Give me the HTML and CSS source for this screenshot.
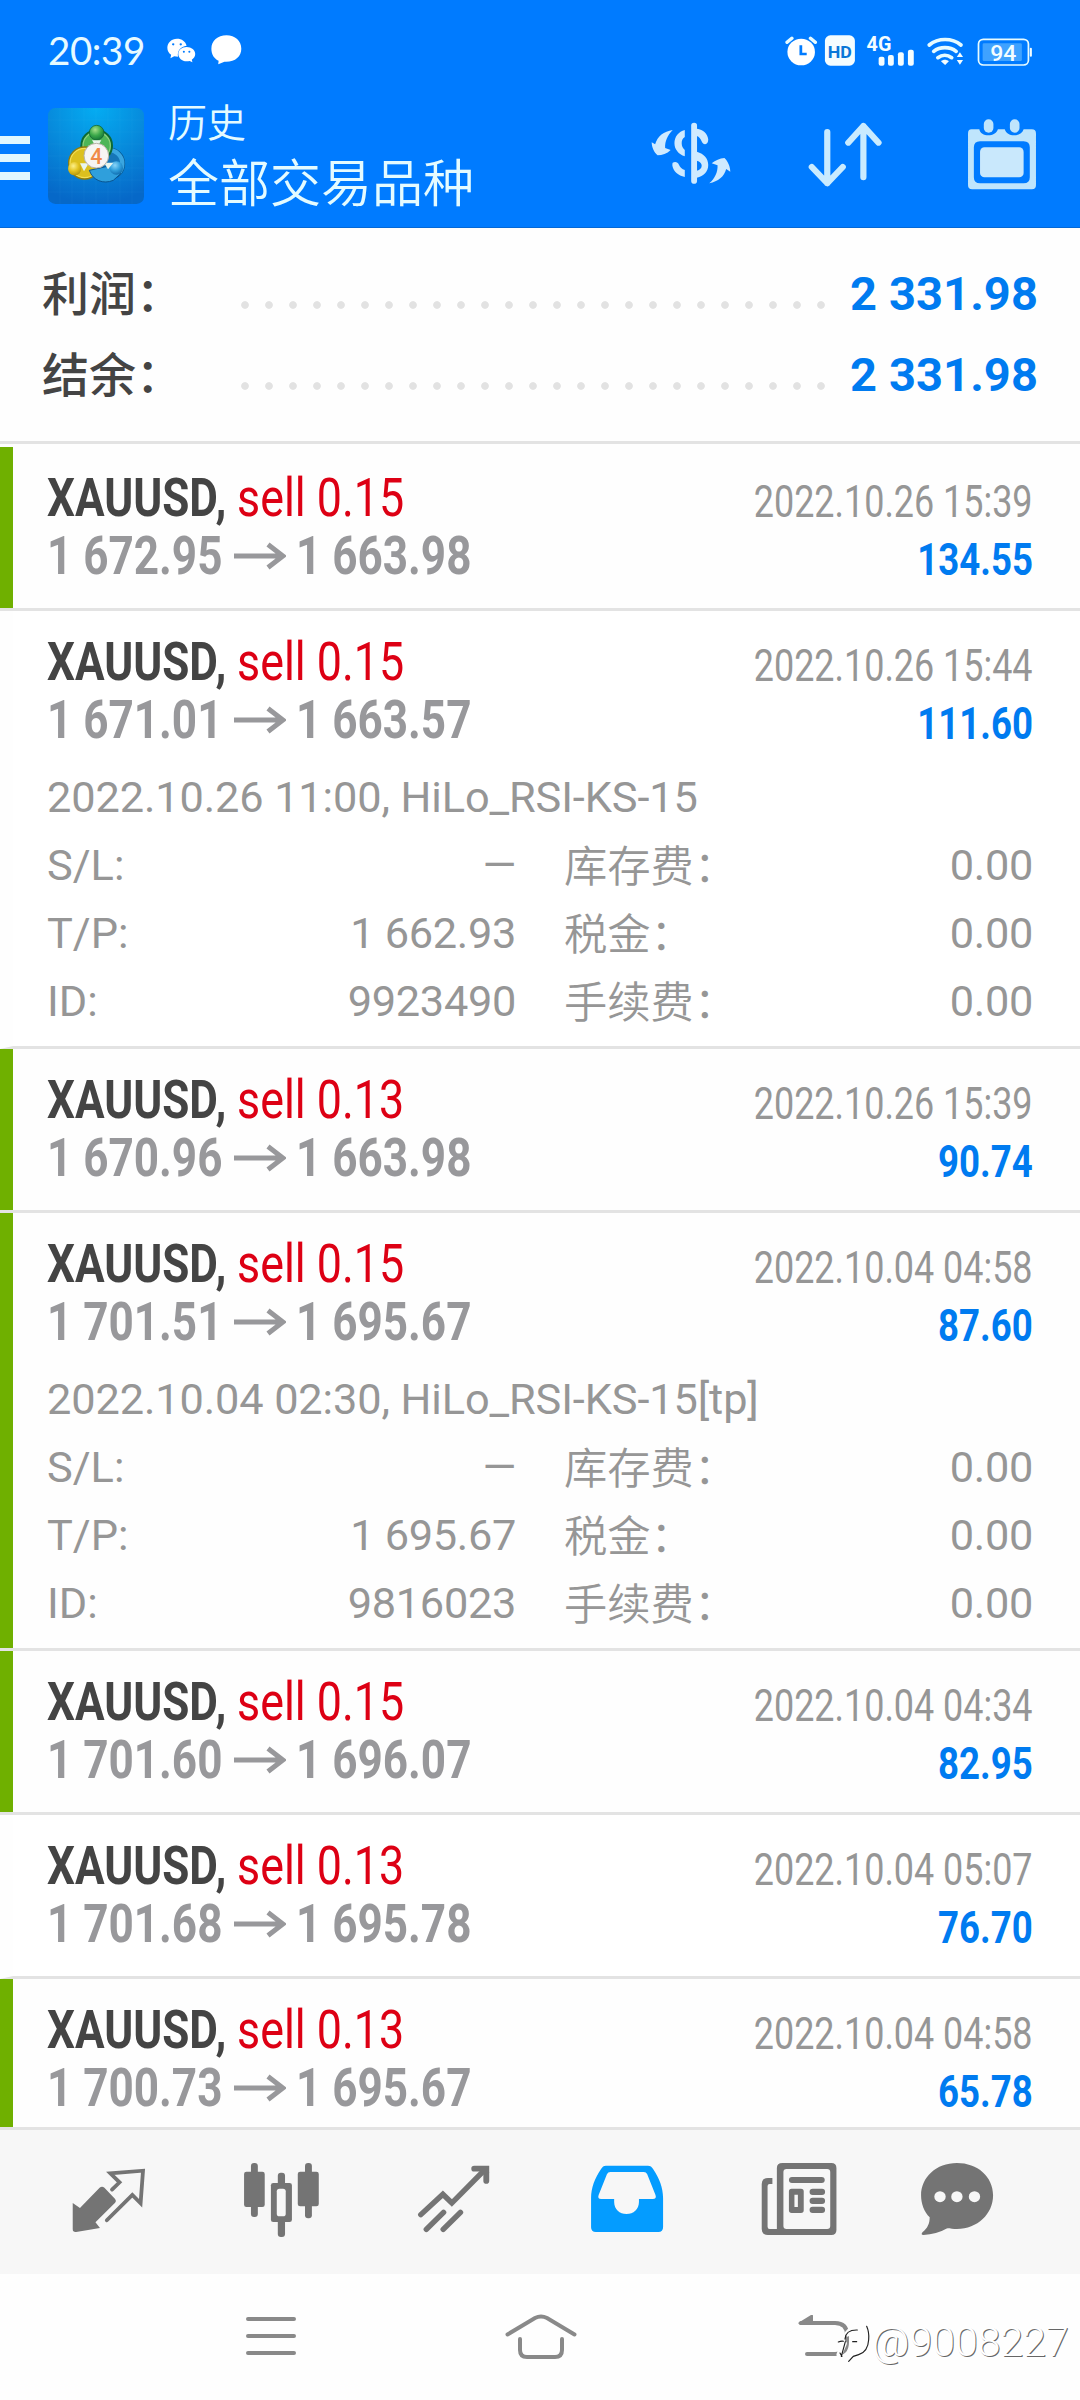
FILE: index.html
```html
<!DOCTYPE html>
<html lang="zh-CN">
<head>
<meta charset="utf-8">
<title>历史</title>
<link rel="stylesheet" href="styles.css">
</head>
<body>
<div class="screen">
  <header class="header">
    <div class="status">
      <span class="clock">20:39</span>
      <svg class="status-apps" viewBox="484 100 218 104" preserveAspectRatio="none" fill="#fff">
        <path d="M513 117c-16 0-28 12-28 27 0 9 4 16 11 21l-2 11 11-6c4 1 7 1 11 1-3-18 8-31 25-33-3-13-14-21-28-21z"/>
        <path d="M541 142c-14 0-24 9-24 21s10 22 24 22c3 0 6 0 9-1l8 4-2-8c6-4 10-10 10-17 0-12-11-21-25-21z"/>
        <g fill="#007bff"><circle cx="502" cy="134" r="3.5"/><circle cx="524" cy="134" r="3.5"/><circle cx="533" cy="156" r="3"/><circle cx="549" cy="156" r="3"/></g>
        <path d="M657 107c-26 0-44 17-44 40 0 17 8 30 21 36l-1 11 18-8c30 2 49-15 49-39 0-23-18-40-43-40z"/>
      </svg>
      <svg class="status-system" viewBox="712 100 722 104" preserveAspectRatio="none" fill="#f4fdff">
        <circle cx="759" cy="157" r="40" fill="#fff"/>
        <path d="M718 128l14-12M800 128l-14-12" stroke="#e6fbff" stroke-width="10" stroke-linecap="round"/>
        <path d="M758 137v26h17" fill="none" stroke="#007bff" stroke-width="8"/>
        <rect x="828" y="107" width="87" height="91" rx="16"/>
        <text x="836" y="174" class="t-hd" textLength="70" lengthAdjust="spacingAndGlyphs" fill="#0a78d8">HD</text>
        <text x="949" y="153" class="t-4g" textLength="72" lengthAdjust="spacingAndGlyphs">4G</text>
        <rect x="984" y="171" width="17" height="27" rx="6"/><rect x="1011" y="166" width="17" height="32" rx="6"/><rect x="1040" y="158" width="17" height="40" rx="6"/><rect x="1069" y="150" width="17" height="48" rx="6"/>
        <g fill="none" stroke="#e6fbff" stroke-width="11" stroke-linecap="round"><path d="M1131 136c26-22 66-22 92 0"/><path d="M1144 155c18-15 47-15 65 0"/><path d="M1156 174c12-9 28-9 40 0"/></g>
        <path d="M1165 185c7-6 16-6 23 0l-11 11z"/>
        <path d="M1211 172l9-14 9 14zM1211 181l9 14 9-14z"/>
        <rect x="1274" y="119" width="145" height="77" rx="14" fill="none" stroke="#e6fbff" stroke-width="5"/>
        <rect x="1286" y="131" width="114" height="53" rx="4" fill="#3fa2ff"/>
        <rect x="1423" y="144" width="6" height="27" rx="3"/>
        <text x="1308" y="183" class="t-bat" textLength="76" lengthAdjust="spacingAndGlyphs">94</text>
      </svg>
    </div>
    <div class="toolbar">
      <svg class="burger" viewBox="0 0 30 44" fill="#e0f7ff"><path d="M0 0h30v8H0zM0 18h30v8H0zM0 36h30v8H0z"/></svg>
      <svg class="logo" viewBox="0 0 288 288">
        <defs>
          <radialGradient id="bg" cx=".5" cy="0" r="1"><stop offset="0" stop-color="#04acf2"/><stop offset=".5" stop-color="#078bdc"/><stop offset="1" stop-color="#0668c8"/></radialGradient>
          <radialGradient id="gg" cx=".4" cy=".3" r=".8"><stop offset="0" stop-color="#a6e08a"/><stop offset=".5" stop-color="#3ba84a"/><stop offset="1" stop-color="#0d6a34"/></radialGradient>
          <radialGradient id="gy" cx=".4" cy=".3" r=".8"><stop offset="0" stop-color="#fdf08a"/><stop offset=".5" stop-color="#e2c21e"/><stop offset="1" stop-color="#a88a0c"/></radialGradient>
          <radialGradient id="gb" cx=".4" cy=".3" r=".8"><stop offset="0" stop-color="#8ad4f8"/><stop offset=".5" stop-color="#2f9fdc"/><stop offset="1" stop-color="#0a62a6"/></radialGradient>
        </defs>
        <rect width="288" height="288" rx="22" fill="url(#bg)"/>
        <path d="M36 0v288M72 0v288M108 0v288M144 0v288M180 0v288M216 0v288M252 0v288M0 36h288M0 72h288M0 108h288M0 144h288M0 180h288M0 216h288M0 252h288" stroke="#6fd0ff" stroke-opacity=".08" stroke-width="2"/>
        <circle cx="182" cy="167" r="42" fill="none" stroke="#07568f" stroke-width="15"/>
        <circle cx="182" cy="167" r="41" fill="#1676b8" stroke="#3aa6e0" stroke-width="13"/>
        <circle cx="146" cy="113" r="49" fill="#0d6a34"/><circle cx="146" cy="113" r="41" fill="#4db557" stroke="#8bd17b" stroke-width="4"/>
        <circle cx="110" cy="165" r="50" fill="#8e7c0c"/><circle cx="110" cy="165" r="44" fill="#dcc01e" stroke="#f3df55" stroke-width="4"/>
        <path d="M124 187c10 30 42 43 72 30l22-20-30-24z" fill="#2f9fdc" stroke="#0a5590" stroke-width="3"/>
        <circle cx="146" cy="74" r="22" fill="url(#gg)" stroke="#0b5a2c" stroke-width="2"/>
        <circle cx="80" cy="182" r="20" fill="url(#gy)"/>
        <circle cx="205" cy="180" r="20" fill="url(#gb)"/>
        <path d="M132 97l28 0-14 22zM96 166l26 0-14 24zM168 164l28 0-16 20z" fill="#e8f5ee"/>
        <circle cx="145" cy="143" r="37" fill="#f7f5f3" stroke="#b8b2a8" stroke-width="3"/>
        <text x="145" y="167" text-anchor="middle" class="t-logo">4</text>
      </svg>
      <div class="titles">
        <div class="title-small">历史</div>
        <div class="title-large">全部交易品种</div>
      </div>
      <svg class="ic-money" viewBox="320 350 232 240" preserveAspectRatio="none" fill="#cfeaff">
        <path d="M445 379v166" stroke="#cfeaff" stroke-width="17" stroke-linecap="round"/>
        <path d="M418 392v21c-7 5-9 11-9 19 0 9 3 15 9 20v19c-18-6-30-20-30-39 0-20 12-35 30-40z"/>
        <path d="M453 388c19 3 31 15 33 32 0 9-3 14-9 15-11 0-10-20-24-25z"/>
        <path d="M383 490c8-4 15-1 18 6 3 8 9 13 17 16v21c-19-5-33-17-36-34 0-5 0-8 1-9z"/>
        <path fill-rule="evenodd" d="M453 457c21 6 33 21 33 40 0 20-13 34-33 38zM453 484v30c9-3 14-8 14-15s-5-13-14-15z"/>
        <path d="M383 392c-26 4-44 18-51 43l-10-6c0 14 7 31 17 39 14 0 27-5 38-16l-16-6c-1-20 7-38 22-54z"/>
        <path d="M489 552c26-6 43-20 49-43l12 8c0-15-7-31-17-41-14 1-26 7-37 16l17 6c1 21-8 40-24 54z"/>
      </svg>
      <svg class="ic-sort" viewBox="780 350 218 240" preserveAspectRatio="none" fill="none" stroke="#c9ebff" stroke-width="18" stroke-linecap="round" stroke-linejoin="round"><path d="M836 398v154M791 503l45 49 45-49M941 534V380M897 430l44-50 44 50"/></svg>
      <svg class="ic-cal" viewBox="1240 350 204 240" preserveAspectRatio="none" fill="#bfe5fc">
        <path fill-rule="evenodd" d="M1253 390h23c2 12 13 18 26 18s24-6 28-18h20c4 12 14 18 27 18s25-6 28-18h24q12 0 12 12v156q0 12-12 12h-174q-12 0-12-12V402q0-12 10-12zM1278 426q-18 0-18 18v90q0 18 18 18h127q18 0 18-18v-90q0-18-18-18z"/>
        <rect x="1289" y="360" width="28" height="40" rx="14"/><rect x="1365" y="360" width="28" height="40" rx="14"/>
        <rect x="1278" y="444" width="127" height="90" rx="13" fill="#c9e8fc"/>
      </svg>
    </div>
  </header>

  <section class="summary">
    <div class="sum-row"><span class="sum-label">利润：</span><span class="dots"></span><span class="sum-value">2 331.98</span></div>
    <div class="sum-row"><span class="sum-label">结余：</span><span class="dots"></span><span class="sum-value">2 331.98</span></div>
  </section>

  <main class="trades">
    <article class="trade marked">
      <div class="line"><span class="name"><b>XAUUSD,</b></span><span class="side">sell 0.15</span><span class="date">2022.10.26 15:39</span></div>
      <div class="line"><span class="price">1 672.95</span><svg class="arrow" viewBox="0 0 52 28"><path d="M0 14h49M34 2.500l15 11.500-15 11.500"/></svg><span class="price">1 663.98</span><span class="profit">134.55</span></div>
    </article>
    <article class="trade">
      <div class="line"><span class="name"><b>XAUUSD,</b></span><span class="side">sell 0.15</span><span class="date">2022.10.26 15:44</span></div>
      <div class="line"><span class="price">1 671.01</span><svg class="arrow" viewBox="0 0 52 28"><path d="M0 14h49M34 2.500l15 11.500-15 11.500"/></svg><span class="price">1 663.57</span><span class="profit">111.60</span></div>
      <div class="details">
        <div class="comment">2022.10.26 11:00, HiLo_RSI-KS-15</div>
        <span>S/L:</span><span class="num">—</span><span class="fee">库存费：</span><span class="num">0.00</span>
        <span>T/P:</span><span class="num">1 662.93</span><span class="fee">税金：</span><span class="num">0.00</span>
        <span>ID:</span><span class="num">9923490</span><span class="fee">手续费：</span><span class="num">0.00</span>
      </div>
    </article>
    <article class="trade marked">
      <div class="line"><span class="name"><b>XAUUSD,</b></span><span class="side">sell 0.13</span><span class="date">2022.10.26 15:39</span></div>
      <div class="line"><span class="price">1 670.96</span><svg class="arrow" viewBox="0 0 52 28"><path d="M0 14h49M34 2.500l15 11.500-15 11.500"/></svg><span class="price">1 663.98</span><span class="profit">90.74</span></div>
    </article>
    <article class="trade marked">
      <div class="line"><span class="name"><b>XAUUSD,</b></span><span class="side">sell 0.15</span><span class="date">2022.10.04 04:58</span></div>
      <div class="line"><span class="price">1 701.51</span><svg class="arrow" viewBox="0 0 52 28"><path d="M0 14h49M34 2.500l15 11.500-15 11.500"/></svg><span class="price">1 695.67</span><span class="profit">87.60</span></div>
      <div class="details">
        <div class="comment">2022.10.04 02:30, HiLo_RSI-KS-15[tp]</div>
        <span>S/L:</span><span class="num">—</span><span class="fee">库存费：</span><span class="num">0.00</span>
        <span>T/P:</span><span class="num">1 695.67</span><span class="fee">税金：</span><span class="num">0.00</span>
        <span>ID:</span><span class="num">9816023</span><span class="fee">手续费：</span><span class="num">0.00</span>
      </div>
    </article>
    <article class="trade marked">
      <div class="line"><span class="name"><b>XAUUSD,</b></span><span class="side">sell 0.15</span><span class="date">2022.10.04 04:34</span></div>
      <div class="line"><span class="price">1 701.60</span><svg class="arrow" viewBox="0 0 52 28"><path d="M0 14h49M34 2.500l15 11.500-15 11.500"/></svg><span class="price">1 696.07</span><span class="profit">82.95</span></div>
    </article>
    <article class="trade">
      <div class="line"><span class="name"><b>XAUUSD,</b></span><span class="side">sell 0.13</span><span class="date">2022.10.04 05:07</span></div>
      <div class="line"><span class="price">1 701.68</span><svg class="arrow" viewBox="0 0 52 28"><path d="M0 14h49M34 2.500l15 11.500-15 11.500"/></svg><span class="price">1 695.78</span><span class="profit">76.70</span></div>
    </article>
    <article class="trade marked">
      <div class="line"><span class="name"><b>XAUUSD,</b></span><span class="side">sell 0.13</span><span class="date">2022.10.04 04:58</span></div>
      <div class="line"><span class="price">1 700.73</span><svg class="arrow" viewBox="0 0 52 28"><path d="M0 14h49M34 2.500l15 11.500-15 11.500"/></svg><span class="price">1 695.67</span><span class="profit">65.78</span></div>
    </article>
  </main>

  <nav class="tabs">
    <svg viewBox="210 180 220 240" preserveAspectRatio="none" fill="#747474">
      <path d="M293 263q7-5 14 0l31 34q5 6 0 11l-57 59 13 17-69 12q-10 1-10-8V309l21 15z"/>
      <path d="M329 269l22-22-27-27 95-8-7 98-24-25-74 76" fill="none" stroke="#747474" stroke-width="11" stroke-linecap="round"/>
    </svg>
    <svg viewBox="703 180 228 240" preserveAspectRatio="none" fill="#747474">
      <rect x="729" y="189" width="20" height="162" rx="9"/><rect x="709" y="215" width="60" height="106" rx="7"/>
      <rect x="886" y="189" width="20" height="166" rx="9"/><rect x="865" y="215" width="61" height="104" rx="7"/>
      <rect x="807" y="218" width="21" height="193" rx="9"/><rect x="787" y="249" width="61" height="117" rx="7"/><rect x="804" y="266" width="26" height="83" rx="8" fill="#f7f7f7"/>
    </svg>
    <svg viewBox="1207 180 220 240" preserveAspectRatio="none" fill="none" stroke="#747474" stroke-width="16" stroke-linecap="round"><path d="M1221 344l64-61 26 26 96-100M1237 388l50-51M1286 388l50-51"/><path d="M1376 206h35v37M1400 206l11 11" stroke-width="17"/></svg>
    <svg viewBox="141 180 220 240" preserveAspectRatio="none" fill="#049cff"><path fill-rule="evenodd" d="M190 197h122q10 0 15 10c18 28 29 56 29 87v88q0 14-14 14H161q-14 0-14-14v-88c0-31 11-59 29-87q5-10 14-10zM203 216q-7 0-10 7l-24 62q-4 12 7 12h38v9c0 22 16 36 36 36s36-14 36-36v-9h40q12 0 8-12l-24-62q-3-7-10-7z"/></svg>
    <svg viewBox="641 180 228 240" preserveAspectRatio="none" fill="#747474">
      <path fill-rule="evenodd" d="M706 189h142q15 0 15 15v186q0 15-15 15H664q-18 0-18-18V252q0-18 18-18h13v18h-8q-6 0-6 6v122q0 7 6 7h21V204q0-15 16-15zM718 207q-9 0-9 9v162q0 9 9 9h118q9 0 9-9V216q0-9-9-9z"/>
      <rect x="725" y="231" width="104" height="18" rx="9"/><path fill-rule="evenodd" d="M733 266h27q8 0 8 8v57q0 8-8 8h-27q-8 0-8-8v-57q0-8 8-8zM741 284v37h10v-37z"/>
      <rect x="785" y="266" width="45" height="19" rx="9"/><rect x="785" y="293" width="45" height="19" rx="9"/><rect x="785" y="320" width="45" height="19" rx="9"/>
    </svg>
    <svg viewBox="1103 180 220 240" preserveAspectRatio="none" fill="#747474">
      <path d="M1213 189c-60 0-104 43-104 97 0 26 9 50 25 66 0 19-6 33-21 45q-6 8 3 8c25-1 48-8 69-20 9 2 18 2 28 2 60 0 105-45 105-101s-45-97-105-97z"/>
      <g fill="#f7f7f7"><circle cx="1164" cy="290" r="16.500"/><circle cx="1213" cy="290" r="16.500"/><circle cx="1264" cy="290" r="16.500"/></g>
    </svg>
  </nav>

  <footer class="sysnav">
    <svg class="sys-menu" viewBox="0 0 50 44"><path d="M2 5h46M2 22h46M2 39h46"/></svg>
    <svg class="sys-home" viewBox="0 0 72 46"><path d="M2.500 21.500L30 5q6-3 12 0l27.500 16.500M15 26v11q0 7 7 7h28q7 0 7-7V26"/></svg>
    <svg class="sys-back" viewBox="0 0 56 46"><path d="M3 8h34q12 0 12 12v7q0 12-12 12H9"/><path class="head" d="M0 8L13 0q2-1 2 1v9H2z"/></svg>
    <div class="watermark">
      <svg viewBox="0 0 114 150"><path class="halo" d="M16 112l14-32M40 50q14-20 48-16 18 40 4 78l-28 18"/><path class="ink" d="M33 66q2-28 37-27M13 75q10-4 15-2M22 118q6-22 12-44M18 108l6 10M98 28q8 18 6 40-2 36-30 45l-16 5-14 15M56 74h12"/></svg>
      <span>@9008227</span>
    </div>
  </footer>
</div>
</body>
</html>
```
FILE: styles.css
```css
* { box-sizing: border-box; }
body { margin: 0; background: #fff; font-family: Roboto, "Noto Sans CJK SC", sans-serif; }
svg { display: block; flex: none; }

.screen { width: 1080px; height: 2400px; display: flex; flex-direction: column; overflow: hidden; background: #fefefe; }

.header { flex: none; height: 228px; background: #007bff; border-bottom: 1px solid #0468d6; }
.status { height: 84px; padding: 33px 46px 0 48px; display: flex; align-items: flex-start; }
.clock { width: 118.700px; font-family: Lato, sans-serif; font-size: 38.500px; line-height: 35px; color: #e6faff; letter-spacing: -.4px; }
.status-apps { width: 75px; height: 34.700px; }
.status-system { width: 248.600px; height: 34.700px; margin-left: auto; }
.t-hd { font: 700 51px Roboto, sans-serif; }
.t-4g { font: 700 60px Roboto, sans-serif; }
.t-bat { font: 500 65px Roboto, sans-serif; }
.t-logo { font: 500 64px Roboto, sans-serif; fill: #f08a48; }

.toolbar { height: 144px; padding-right: 43px; display: flex; align-items: center; }
.burger { width: 30px; height: 44px; margin: 4px 18px 0 0; }
.logo { width: 96px; height: 96px; }
.titles { width: 507px; padding: 0 0 12px 24px; color: #e4fbff; font-family: "Noto Sans CJK SC", sans-serif; font-weight: 350; }
.title-small { font-size: 39px; line-height: 61px; }
.title-large { font-size: 51px; line-height: 59px; }
.ic-money { width: 80px; height: 80px; }
.ic-sort { width: 75px; height: 80px; margin-left: 77px; }
.ic-cal { width: 70px; height: 80px; margin-left: auto; }

.summary { flex: none; height: 216px; padding: 25px 42px 0; border-bottom: 3px solid #e3e3e3; }
.sum-row { height: 81px; display: flex; line-height: 81px; font-size: 47px; }
.sum-label { width: 191px; line-height: 76px; font-family: "Noto Sans CJK SC", sans-serif; font-weight: 500; color: #444; }
.dots { width: 600px; height: 24px; margin-top: 40px; background: radial-gradient(circle, #e2e2e2 3.400px, transparent 4.200px) 0 0 / 24px 24px; }
.sum-value { margin-left: auto; line-height: 82px; font-weight: 700; color: #007bf0; letter-spacing: .1px; }

.trades { flex: 1; min-height: 0; padding-top: 3px; overflow: hidden; }
.trade { height: 164px; padding: 22px 47px 0 34px; border-left: 13px solid transparent; border-bottom: 3px solid #e3e3e3; background: #fff; background-clip: padding-box; }
.trade:has(.details) { height: 438px; }
.trade.marked { border-left: 0; padding-left: 47px; background: linear-gradient(#6fb000, #6fb000) 0 0 / 13px 100% no-repeat padding-box; }
.line { height: 58px; line-height: 58px; font-size: 54px; display: flex; align-items: baseline; white-space: pre; }
.name, .side, .price { transform-origin: left; }
.name { width: 190px; transform: scaleX(.815); color: #444; }
.side { transform: scaleX(.83); color: #dd0014; }
.price { width: 188px; font-weight: 700; color: #98989b; transform: scaleX(.816); }
.arrow { width: 52px; height: 28px; margin: 0 10px 0 -1px; align-self: center; fill: none; stroke: #98989b; stroke-width: 5; }
.date, .profit { margin-left: auto; line-height: 60px; font-size: 44px; transform-origin: right; }
.date { color: #969696; transform: translateY(1px) scaleX(.816); }
.profit { font-weight: 700; color: #007bf0; transform: translateY(1px) scaleX(.832); }

.details { margin-top: 15px; display: grid; grid-template-columns: 100px 369px 220px 297px; grid-auto-rows: 68px; line-height: 68px; font-size: 43.300px; color: #969696; white-space: pre; }
.comment { grid-column: 1 / -1; letter-spacing: -.1px; }
.num { text-align: right; letter-spacing: -.3px; }
.fee { padding-left: 48px; line-height: 63px; font-family: "Noto Sans CJK SC", sans-serif; font-weight: 350; }

.tabs { flex: none; height: 147px; padding: 30px 0 0 22.500px; display: grid; grid-template-columns: repeat(5, 172.600px) 143px; justify-items: center; border-top: 3px solid #e3e3e3; background: #f7f7f7; }
.tabs svg { width: 75.800px; height: 80px; }
.tabs svg:nth-child(2), .tabs svg:nth-child(5) { width: 78.500px; }

.sysnav { position: relative; flex: none; height: 126px; padding: 39px 0 0 246px; display: flex; background: #fefefe; fill: none; stroke: #898989; stroke-width: 4; stroke-linecap: round; }
.sys-menu { width: 50px; height: 44px; margin-top: 1px; }
.sys-home { width: 72px; height: 46px; margin-left: 209px; }
.sys-back { width: 56px; height: 46px; margin: 2px 0 0 221px; }
.sys-back .head { fill: #898989; stroke: none; }
.watermark { position: absolute; left: 834px; top: 43px; display: flex; align-items: center; color: #fff; stroke: none; font-size: 41px; font-weight: 300; line-height: 50px; text-shadow: 1px 1px 0 #666; white-space: nowrap; }
.watermark svg { width: 38px; height: 50px; overflow: visible; }
.watermark .halo { stroke: #fefefe; stroke-width: 17; }
.watermark .ink { stroke: #222; stroke-width: 3.500; }
```
